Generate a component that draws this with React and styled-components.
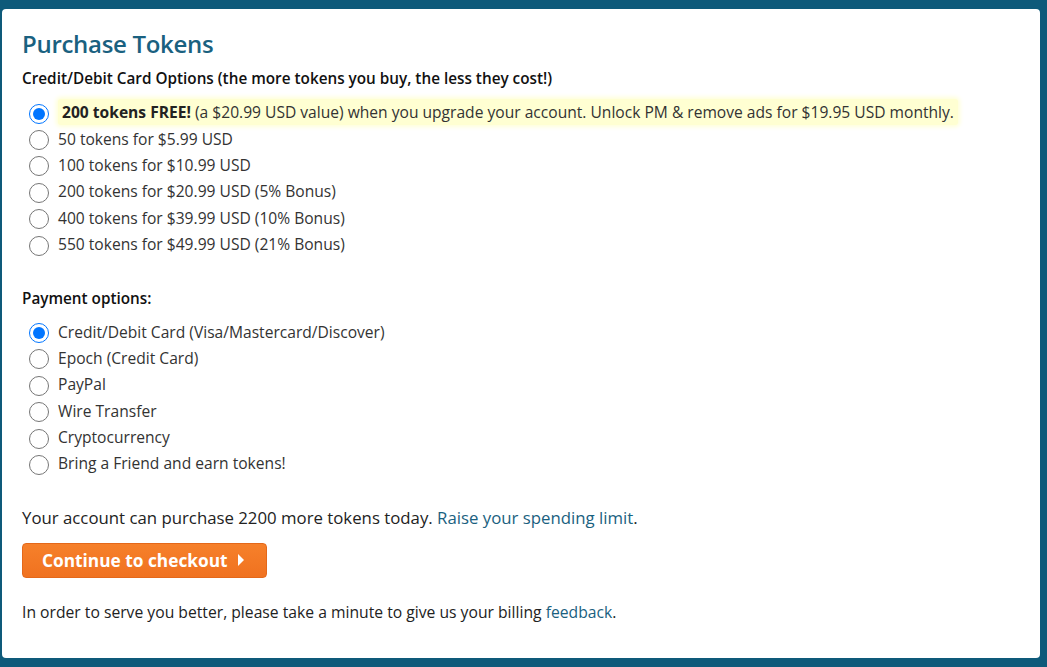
import React from "react";
import styled, { createGlobalStyle } from "styled-components";

const Global = createGlobalStyle`
  html, body { margin: 0; padding: 0; background: #0e5a7a; }
  body { font-family: "Open Sans", "Noto Sans", sans-serif; color: #222; }
`;

const Page = styled.div`
  padding: 9px 7px 9px 2px;
  min-height: 667px;
  box-sizing: border-box;
`;

const Card = styled.div`
  background: #fff;
  border-radius: 4px;
  height: 649px;
  box-sizing: border-box;
  padding: 19px 20px 0 20px;
`;

const Title = styled.h1`
  margin: 0;
  font-size: 24px;
  font-weight: 600;
  color: #1a6180;
  line-height: 32px;
  letter-spacing: -0.3px;
`;

const SectionLabel = styled.div`
  font-size: 15.3px;
  font-weight: 600;
  color: #111;
  line-height: 20px;
  margin-top: ${(p) => p.$mt || 0}px;
`;

const List = styled.div`
  display: flex;
  flex-direction: column;
  margin-top: ${(p) => p.$mt || 0}px;
  padding-left: 7px;
`;

const Row = styled.label`
  display: flex;
  align-items: center;
  height: 26.4px;
  font-size: 15.6px;
  color: #333;
`;

const Radio = styled.input.attrs({ type: "radio" })`
  width: 20px;
  height: 20px;
  margin: 3px 9px 0 0;
  flex: none;
`;

const Highlight = styled.span`
  background: #ffffd2;
  box-shadow: 0 0 4px 2px #ffffd8;
  border-radius: 3px;
  padding: 2px 4px;
  b { font-weight: 700; color: #222; }
`;

const Info = styled.p`
  margin: ${(p) => p.$mt || 0}px 0 0 0;
  font-size: ${(p) => p.$size || 15}px;
  color: #222;
  line-height: 22px;
`;

const Link = styled.a`
  color: #1a6180;
  text-decoration: none;
`;

const Button = styled.button`
  margin-top: 14px;
  display: flex;
  align-items: center;
  gap: 10px;
  width: 245px;
  height: 35px;
  padding: 0 0 0 19px;
  border: 1px solid #e4681a;
  border-radius: 4px;
  background: linear-gradient(#f6802a, #f07220);
  color: #fff;
  font-family: "Open Sans", sans-serif;
  font-weight: 700;
  font-size: 17.3px;
  cursor: pointer;
`;

const Caret = styled.span`
  width: 0;
  height: 0;
  border-top: 6px solid transparent;
  border-bottom: 6px solid transparent;
  border-left: 6px solid #fff;
`;

const tokenOptions = [
  "50 tokens for $5.99 USD",
  "100 tokens for $10.99 USD",
  "200 tokens for $20.99 USD (5% Bonus)",
  "400 tokens for $39.99 USD (10% Bonus)",
  "550 tokens for $49.99 USD (21% Bonus)",
];

const payOptions = [
  "Credit/Debit Card (Visa/Mastercard/Discover)",
  "Epoch (Credit Card)",
  "PayPal",
  "Wire Transfer",
  "Cryptocurrency",
  "Bring a Friend and earn tokens!",
];

export default function App() {
  return (
    <>
      <Global />
      <Page>
        <Card>
          <Title>Purchase Tokens</Title>
          <SectionLabel $mt={8}>
            Credit/Debit Card Options (the more tokens you buy, the less they cost!)
          </SectionLabel>
          <List $mt={11}>
            <Row>
              <Radio name="tok" defaultChecked />
              <Highlight>
                <b>200 tokens FREE!</b> (a $20.99 USD value) when you upgrade your
                account. Unlock PM &amp; remove ads for $19.95 USD monthly.
              </Highlight>
            </Row>
            {tokenOptions.map((t) => (
              <Row key={t}>
                <Radio name="tok" />
                {t}
              </Row>
            ))}
          </List>
          <SectionLabel $mt={31}>Payment options:</SectionLabel>
          <List $mt={10}>
            {payOptions.map((t, i) => (
              <Row key={t}>
                <Radio name="pay" defaultChecked={i === 0} />
                {t}
              </Row>
            ))}
          </List>
          <Info $mt={30} $size={16.8}>
            Your account can purchase 2200 more tokens today.{" "}
            <Link href="#">Raise your spending limit</Link>.
          </Info>
          <Button>
            Continue to checkout
            <Caret />
          </Button>
          <Info $mt={23} $size={15.7}>
            In order to serve you better, please take a minute to give us your billing{" "}
            <Link href="#">feedback</Link>.
          </Info>
        </Card>
      </Page>
    </>
  );
}
